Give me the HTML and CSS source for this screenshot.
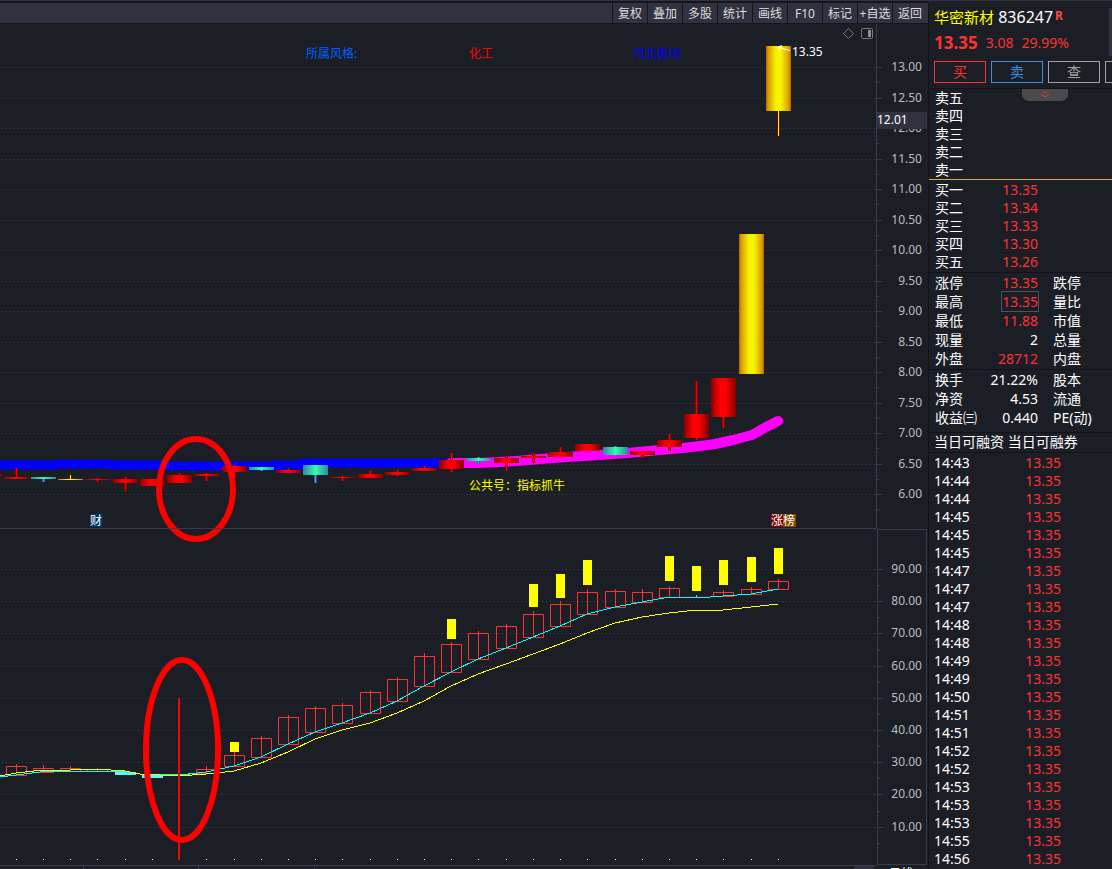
FILE: index.html
```html
<!DOCTYPE html>
<html lang="zh-CN">
<head>
<meta charset="utf-8">
<title>华密新材 836247</title>
<link rel="stylesheet" href="styles.css">
</head>
<body>
<div class="app">
  <main class="main">
    <nav class="toolbar">
      <button>复权</button><button>叠加</button><button>多股</button><button>统计</button><button>画线</button><button>F10</button><button>标记</button><button>+自选</button><button>返回</button>
    </nav>
    <svg class="chart" id="chart" viewBox="0 24 928 845" role="img" aria-label="K线图">
      <defs>
        <linearGradient id="red"><stop offset="0" stop-color="#8a0000"/><stop offset=".35" stop-color="#fa0000"/><stop offset=".6" stop-color="#fa0000"/><stop offset="1" stop-color="#800000"/></linearGradient>
        <linearGradient id="teal"><stop offset="0" stop-color="#3384a8"/><stop offset=".5" stop-color="#33ffaa"/><stop offset="1" stop-color="#3384a8"/></linearGradient>
        <linearGradient id="gold"><stop offset="0" stop-color="#b86000"/><stop offset=".08" stop-color="#d89800"/><stop offset=".4" stop-color="#f8f400"/><stop offset=".6" stop-color="#f8f400"/><stop offset=".92" stop-color="#d89800"/><stop offset="1" stop-color="#b86000"/></linearGradient>
      </defs>
      <g id="grid"></g>
      <path class="band blue" d="M0 465H57V464H110V465H160V466H275V465H302V463H450"/>
      <path class="band magenta" d="M451 463L478 463L500 462L516 461L540 459L567 457L600 455L627 453L660 450L683 448L700 446L715 444L733 440L752 435L766 427L778 421"/>
      <g id="price"></g>
      <g id="osc"></g>
      <path class="thin cyan" d="M0 777L16 775L40 772L70 771H110L125 772L140 774L179 775L206 772L234 766L261 757L288 744L315 732L342 723L370 713L397 701L424 686L451 672L478 659L506 648L533 637L560 626L587 614L615 607L642 602L669 597H710L723 596L751 594L778 589M696.5 597V595"/>
      <path class="thin yellow" d="M0 776L16 773L43 770H70L97 769L125 771L140 774L179 776L206 774L234 771L261 763L288 752L315 739L342 730L370 723L397 713L424 701L451 686L478 674L506 664L533 654L560 644L587 633L615 623L642 617L669 613L696 610H723L751 607L778 604"/>
      <rect class="mark" x="178" y="698" width="2" height="162"/>
      <ellipse class="ring" cx="196" cy="489" rx="37" ry="50"/>
      <ellipse class="ring" cx="182" cy="750" rx="36" ry="90"/>
      <path class="frame" d="M876.5 24V528M0 528.5H877M0 865.5H877M83.5 866V869M198.5 866V869M314.5 866V869"/>
      <rect class="frame" x="877.5" y="529.5" width="49" height="335"/>
      <rect class="cursor" x="877" y="112" width="50" height="17"/>
      <text class="white" x="877" y="124">12.01</text>
      <path class="tool" d="M848.5 28.5L853.5 33.5L848.5 38.5L843.5 33.5Z"/>
      <rect class="tool" x="861.5" y="28.5" width="11" height="10" rx="1"/>
      <rect class="tool-fill" x="868" y="30" width="3" height="7"/>
      <text class="style" x="306" y="58">所属风格:</text>
      <text class="chem" x="469" y="58">化工</text>
      <text class="area" x="633" y="58">河北板块</text>
      <text class="note" x="469" y="490">公共号：指标抓牛</text>
      <path class="arrow" d="M790 50.5L779 47.5M782 45.5L778 47L780 51"/>
      <text class="white" x="792" y="56">13.35</text>
      <rect x="90" y="514" width="13" height="13" fill="#003468"/><text class="white" x="90" y="525">财</text>
      <rect x="771" y="514" width="12" height="13" fill="#7c0000"/><rect x="783" y="514" width="13" height="13" fill="#884400"/><text class="white" x="771" y="525">涨榜</text>
      <rect x="854" y="866" width="20" height="3" fill="#31323f"/>
      <text class="white" x="889" y="878">日线</text>
    </svg>
  </main>
  <aside class="side">
    <header class="head">
      <h1><span class="name">华密新材</span> 836247<sup>R</sup></h1>
      <p class="last"><b>13.35</b><span>3.08</span><span>29.99%</span></p>
      <div class="trade"><button class="buy">买</button><button class="sell">卖</button><button>查</button><button aria-label="更多"></button></div>
      <span class="thumb"></span>
    </header>
    <section class="asks">
      <button class="fold" aria-label="展开"><svg width="10" height="8" viewBox="0 0 10 8"><path d="M3 0L5 2L7 0M1 3L5 6L9 3"/></svg></button>
      <table><tr><th>卖五</th></tr><tr><th>卖四</th></tr><tr><th>卖三</th></tr><tr><th>卖二</th></tr><tr><th>卖一</th></tr></table>
    </section>
    <section class="bids">
      <table><tr><th>买一</th><td class="up">13.35</td><td></td></tr><tr><th>买二</th><td class="up">13.34</td><td></td></tr><tr><th>买三</th><td class="up">13.33</td><td></td></tr><tr><th>买四</th><td class="up">13.30</td><td></td></tr><tr><th>买五</th><td class="up">13.26</td><td></td></tr></table>
    </section>
    <section class="stats">
      <table><tr><th>涨停</th><td class="up">13.35</td><th>跌停</th></tr><tr><th>最高</th><td class="up"><span class="boxed">13.35</span></td><th>量比</th></tr><tr><th>最低</th><td class="up">11.88</td><th>市值</th></tr><tr><th>现量</th><td>2</td><th>总量</th></tr><tr><th>外盘</th><td class="up">28712</td><th>内盘</th></tr></table>
    </section>
    <section class="stats funds">
      <table><tr><th>换手</th><td>21.22%</td><th>股本</th></tr><tr><th>净资</th><td>4.53</td><th>流通</th></tr><tr><th>收益㈢</th><td>0.440</td><th>PE(动)</th></tr></table>
    </section>
    <p class="margin">当日可融资 当日可融券</p>
    <table class="deals"><tbody id="deals"></tbody></table>
  </aside>
</div>
<script src="chart.js"></script>
</body>
</html>
```
FILE: styles.css
```css
* { box-sizing: border-box; }
body {
  margin: 0;
  background: #1b1e25;
  color: #fff;
  font: 14px/18px "Noto Sans", "Noto Sans CJK SC", sans-serif;
}
button { padding: 0; background: none; border: 0; color: inherit; font: inherit; }
p, h1 { margin: 0; }
.app {
  display: grid;
  grid-template-columns: minmax(0, 1fr) 184px;
  height: 100vh;
  overflow: hidden;
  border-top: 1px solid #31323f;
}
.main { padding-top: 2px; background: #14161b; }
.toolbar {
  display: flex;
  justify-content: flex-end;
  height: 21px;
  padding-right: 1px;
  background: #31323f;
  border-bottom: 1px solid #14161b;
}
.toolbar button {
  display: flex;
  justify-content: center;
  align-items: center;
  width: 35px;
  padding-top: 2px;
  border-left: 1px solid #14161b;
  color: #dcdcdc;
  font-size: 12px;
  white-space: nowrap;
}
.chart { display: block; width: 100%; background: #1b1e25; }
.chart text { font-size: 12px; }
.grid { stroke: #3e434e; stroke-dasharray: 1 3; }
.frame { fill: none; stroke: #353d4a; }
.label { fill: #bcbcbc; text-anchor: end; }
.band { fill: none; stroke-width: 9; stroke-linecap: butt; stroke-linejoin: round; }
.blue { stroke: #00f; }
.magenta { stroke: #f0f; stroke-width: 10; stroke-linecap: round; }
.thin { fill: none; shape-rendering: crispEdges; }
.yellow { stroke: #ff0; }
.cyan { stroke: #0ff; }
.hollow { fill: none; stroke: #ff3232; }
.solid { fill: #54fcfc; }
.signal { fill: #ff0; }
.mark { fill: #f00; }
.ring { fill: none; stroke: #f00; stroke-width: 6; }
.cursor { fill: #30333f; }
.tool { fill: none; stroke: #787878; }
.tool-fill { fill: #909090; }
.arrow { fill: none; stroke: #fff; }
.white { fill: #fff; }
.style { fill: #0060ff; }
.chem { fill: #f00; }
.area { fill: #00f; }
.note { fill: #ff0; font-family: "Noto Sans CJK TC", "Noto Sans CJK SC", sans-serif; }
.side { margin-top: 2px; border-left: 1px solid #111318; overflow: hidden; }
.head { position: relative; height: 86px; padding: 4px 0 0 5px; border-bottom: 1px solid #111318; }
.head h1 { padding-bottom: 1px; font-size: 16px; font-weight: 400; line-height: 20px; white-space: nowrap; }
.name { color: #ff0; font-size: 15px; }
.head sup { margin-left: 2px; color: #ff4848; font-size: 12px; font-weight: 700; line-height: 1px; vertical-align: 3px; }
.last { display: flex; gap: 8px; height: 33px; line-height: 29px; color: #ff3232; }
.last b { font-size: 17px; }
.trade { display: flex; gap: 5px; }
.trade button { flex: 0 0 52px; height: 22px; border: 1px solid #a0a0a0; color: #a0a0a0; line-height: 20px; }
.trade .buy { border-color: #ff3232; color: #ff3232; }
.trade .sell { border-color: #3a8fdc; color: #3a8fdc; }
.thumb { position: absolute; top: 5px; right: 0; width: 3px; height: 48px; background: #31323f; }
.asks { position: relative; height: 91px; border-bottom: 1px solid #e0a450; }
.fold {
  position: absolute;
  top: 0;
  left: 93px;
  width: 46px;
  height: 12px;
  background: #4a4a4d;
  border-radius: 0 0 7px 7px;
}
.fold svg { display: block; margin: 2px auto; fill: none; stroke: #ff3232; }
table { width: 100%; table-layout: fixed; border-collapse: collapse; }
tr { height: 18px; }
th, td { padding: 0; font-weight: 400; line-height: 18px; white-space: nowrap; }
th { padding-left: 6px; text-align: left; }
th:first-child { width: 50px; }
td:nth-child(2) { width: 59px; text-align: right; }
th:nth-child(3) { padding-left: 15px; }
.up { color: #ff3232; }
.bids { padding: 1px 0; border-bottom: 1px solid #111318; }
.stats { padding-bottom: 1px; border-bottom: 1px solid #111318; }
.stats tr { height: 19px; }
.funds { padding-bottom: 5px; }
.boxed { outline: 1px solid #4a5361; }
.margin { height: 20px; padding-left: 5px; border-bottom: 1px solid #111318; white-space: nowrap; }
.deals { margin-top: 1px; }
.deals th { padding-left: 5px; }
.deals td:nth-child(2) { width: 82px; }
```
FILE: chart.js
```js
const NS = 'http://www.w3.org/2000/svg';
const add = (parent, name, attrs, text) => {
  const el = document.createElementNS(NS, name);
  for (const key in attrs) el.setAttribute(key, attrs[key]);
  if (text) el.textContent = text;
  document.getElementById(parent).append(el);
};

const axis = (top, step, count, value, delta, edge) => {
  for (let i = 0; i < count; i++) {
    const y = Math.round(top + i * step) + 0.5;
    const mid = Math.round(top + (i + 0.5) * step) + 0.5;
    add('grid', 'path', { class: 'grid', d: `M2 ${y}H876` });
    add('grid', 'path', { class: 'frame', d: `M${edge} ${y}h5M${edge} ${mid}h2` });
    add('grid', 'text', { class: 'label', x: 922, y: y + 3.5 }, (value - i * delta).toFixed(2));
  }
};
axis(67, 30.5, 15, 13, 0.5, 877);
axis(569, 32.2, 9, 90, 10, 878);

// centre x, body top, body bottom, wick top, wick bottom, colour
const candles = [
  [-11, 474, 477, 474, 477, 'red'], [16, 477, 479, 468, 479, 'red'], [43, 477, 479, 477, 482, 'teal'],
  [70, 479, 480, 475, 480, 'gold'], [97, 479, 480, 478, 482, 'red'], [125, 479, 483, 477, 491, 'red'],
  [152, 479, 486, 479, 486, 'red'], [179, 475, 483, 473, 483, 'red'], [206, 474, 476, 473, 481, 'red'],
  [234, 466, 472, 465, 479, 'red'], [261, 467, 470, 467, 471, 'teal'], [288, 470, 473, 468, 473, 'red'],
  [315, 465, 475, 465, 483, 'teal'], [342, 477, 478, 476, 481, 'red'], [370, 474, 478, 471, 478, 'red'],
  [397, 472, 475, 470, 476, 'red'], [424, 468, 471, 466, 471, 'red'], [451, 460, 469, 453, 472, 'red'],
  [478, 458, 461, 457, 464, 'teal'], [506, 458, 463, 456, 471, 'red'], [533, 456, 458, 453, 463, 'red'],
  [560, 452, 457, 447, 457, 'red'], [587, 444, 451, 444, 451, 'red'], [615, 447, 455, 446, 456, 'teal'],
  [642, 451, 455, 451, 458, 'red'], [669, 440, 447, 434, 451, 'red'], [696, 414, 438, 381, 440, 'red'],
  [723, 378, 417, 378, 428, 'red'], [751, 234, 374, 234, 374, 'gold'], [778, 46, 111, 46, 136, 'gold']
];
const wick = { red: ['#900000', '#f00000'], teal: ['#3058c0', '#38a8b8'], gold: ['#800000', '#ffff00'] };
for (const [x, top, bottom, high, low, color] of candles) {
  const [edge, core] = wick[color];
  add('price', 'rect', { x: x - 1, y: high, width: 3, height: low - high, fill: edge });
  add('price', 'rect', { x, y: high, width: 1, height: low - high, fill: core });
  add('price', 'rect', { x: x - 12, y: top, width: 25, height: bottom - top, fill: `url(#${color})` });
}

// centre x, body top, body bottom, wick top
const boxes = [
  [16, 766, 775, 764], [43, 768, 772, 765], [70, 768, 771, 766], [97, 769, 771, 768], [206, 769, 773, 766],
  [234, 755, 766, 752], [261, 738, 757, 736], [288, 717, 744, 715], [315, 708, 732, 706], [342, 705, 723, 703],
  [370, 692, 713, 690], [397, 679, 701, 677], [424, 656, 686, 653], [451, 644, 672, 642], [478, 633, 659, 631],
  [506, 626, 648, 624], [533, 614, 637, 611], [560, 604, 626, 601], [587, 592, 614, 589], [615, 591, 607, 589],
  [642, 592, 602, 589], [669, 588, 597, 586], [723, 592, 596, 590], [751, 589, 594, 587], [778, 581, 589, 579]
];
for (const [x, top, bottom, high] of boxes) {
  add('osc', 'path', { class: 'hollow', d: `M${x - 9.5} ${top + 0.5}h20V${bottom + 0.5}h-20ZM${x + 0.5} ${high}V${bottom}` });
}
for (const [x, y, h] of [[125, 772, 3], [152, 774, 4], [179, 774, 2]]) {
  add('osc', 'rect', { class: 'solid', x: x - 10, y, width: 21, height: h });
}
for (const [x, top, bottom] of [
  [234, 742, 752], [451, 619, 639], [533, 584, 607], [560, 574, 598], [587, 560, 585],
  [669, 556, 581], [696, 566, 591], [723, 560, 585], [751, 557, 582], [778, 548, 574]
]) {
  add('osc', 'rect', { class: 'signal', x: x - 4, y: top, width: 9, height: bottom - top });
}
for (const [x] of candles.slice(1)) {
  add('osc', 'rect', { x, y: 859, width: 1, height: 1, fill: '#ffffa0' });
}

const times = '14:43 14:44 14:44 14:45 14:45 14:45 14:47 14:47 14:47 14:48 14:48 14:49 14:49 14:50 14:51 14:51 14:52 14:52 14:53 14:53 14:53 14:55 14:56';
document.getElementById('deals').innerHTML = times.split(' ')
  .map(t => `<tr><th>${t}</th><td class="up">13.35</td><td></td></tr>`).join('');
```
